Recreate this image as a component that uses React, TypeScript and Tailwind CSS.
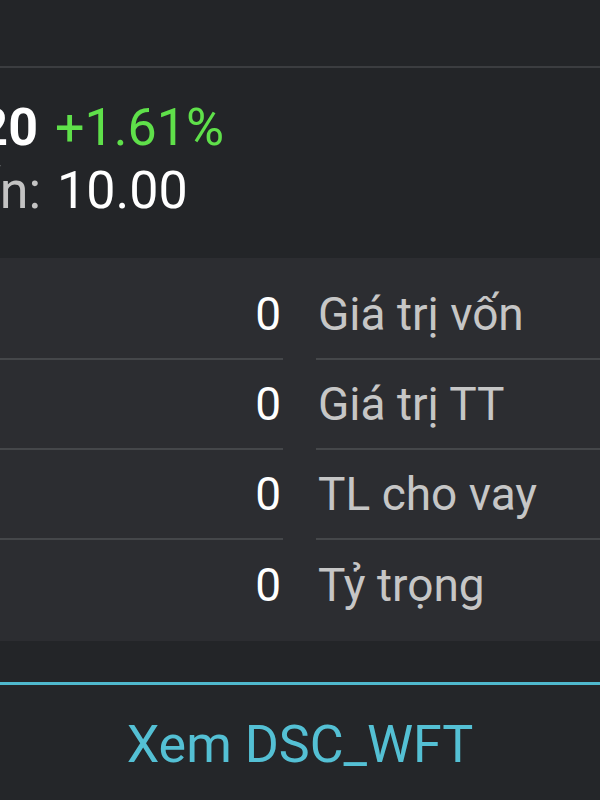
import React from 'react'

const rows = [
  { value: '0', label: 'Giá trị vốn' },
  { value: '0', label: 'Giá trị TT' },
  { value: '0', label: 'TL cho vay' },
  { value: '0', label: 'Tỷ trọng' },
]

export default function App() {
  return (
    <div
      className="w-[600px] h-[800px] overflow-hidden bg-[#232528] flex flex-col"
      style={{ fontFamily: 'Roboto, "Noto Sans", sans-serif' }}
    >
      {/* Top strip */}
      <div className="h-[66px] shrink-0" />
      <div className="h-[2px] shrink-0 bg-[#3b3d40]" />

      {/* Price header */}
      <div className="h-[190px] shrink-0 pt-[28px] text-[52px] leading-[63px]">
        <div className="flex -ml-[260px] whitespace-nowrap">
          <span className="w-[298px] shrink-0 text-right font-bold text-white">63.20</span>
          <span className="ml-[17px] text-[#5fe04a]">+1.61%</span>
        </div>
        <div className="flex -ml-[260px] whitespace-nowrap">
          <span className="w-[301px] shrink-0 text-right text-[#c3c3c3]">Giá vốn:</span>
          <span className="ml-[16px] text-white">10.00</span>
        </div>
      </div>

      {/* Stats panel */}
      <div className="shrink-0 bg-[#2c2d31] pt-[12px] pb-[11px]">
        {rows.map((row, i) => (
          <div key={row.label} className="grid grid-cols-[283px_1fr] gap-x-[33px] h-[90px]">
            <div
              className={`flex items-center justify-end pr-[2px] text-[46px] text-white ${
                i < rows.length - 1 ? 'border-b-2 border-[#45474a]' : ''
              }`}
            >
              {row.value}
            </div>
            <div
              className={`flex items-center pl-[2px] text-[46px] text-[#c6c6c6] whitespace-nowrap ${
                i < rows.length - 1 ? 'border-b-2 border-[#45474a]' : ''
              }`}
            >
              {row.label}
            </div>
          </div>
        ))}
      </div>

      {/* Gap */}
      <div className="h-[41px] shrink-0" />
      <div className="h-[3px] shrink-0 bg-[#4fb9cd]" />

      {/* Bottom action */}
      <button className="h-[120px] shrink-0 bg-[#242629] flex items-center justify-center text-[52px] text-[#54c0d4]">
        Xem DSC_WFT
      </button>
    </div>
  )
}
